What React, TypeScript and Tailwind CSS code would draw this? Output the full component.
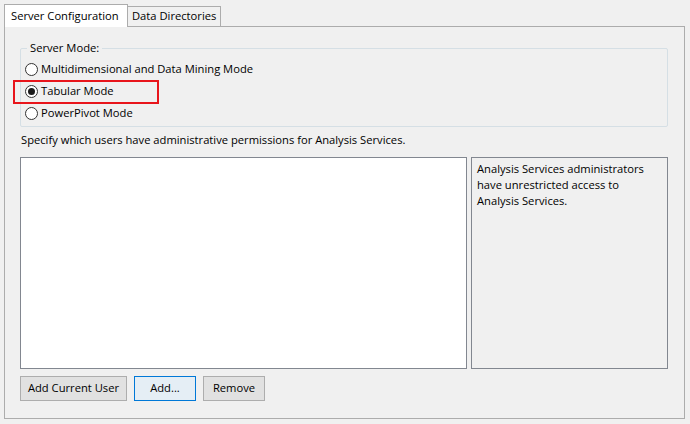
import React from "react";

function Radio({ checked }: { checked?: boolean }) {
  return (
    <span className="w-[13px] h-[13px] rounded-full border border-[#333] bg-white flex items-center justify-center shrink-0">
      {checked && <span className="w-[7px] h-[7px] rounded-full bg-[#1a1a1a]" />}
    </span>
  );
}

export default function App() {
  return (
    <div
      className="w-[690px] h-[424px] bg-[#f0f0f0] text-[11.2px] text-black overflow-hidden relative whitespace-nowrap"
      style={{ fontFamily: '"Open Sans", "Noto Sans", sans-serif' }}
    >
      <div className="pl-[4px] pt-[3px] flex items-end h-[26px]">
        <div className="h-[23px] w-[124px] bg-white border border-b-0 border-[#acacac] flex items-center pl-[6px] relative z-10 -mb-px">
          Server Configuration
        </div>
        <div className="h-[20px] w-[93px] bg-[#f0f0f0] border border-l-0 border-b-0 border-[#acacac] flex items-center pl-[4px]">
          Data Directories
        </div>
      </div>
      <div className="ml-[4px] w-[681px] h-[393px] border border-[#acacac] px-[15px] pt-[21px]">
        <div className="relative h-[79px] border border-[#d5dfe5] rounded-[2px] w-[648px]">
          <span className="absolute -top-[10px] left-[6px] px-[3px] bg-[#f0f0f0] leading-[18px]">Server Mode:</span>
          <div className="flex flex-col pt-[12px] pl-[4px] gap-[5px]">
            <div className="flex items-center gap-[3px] h-[17px]">
              <Radio />
              <span>Multidimensional and Data Mining Mode</span>
            </div>
            <div className="flex items-center gap-[3px] h-[17px]">
              <Radio checked />
              <span>Tabular Mode</span>
            </div>
            <div className="flex items-center gap-[3px] h-[17px]">
              <Radio />
              <span>PowerPivot Mode</span>
            </div>
          </div>
        </div>
        <div className="pl-[1px] pb-[4px] h-[30px] flex items-center">
          Specify which users have administrative permissions for Analysis Services.
        </div>
        <div className="flex gap-[4px] h-[212px]">
          <div className="w-[447px] bg-white border border-[#828790]" />
          <div className="w-[197px] border border-[#828790] px-[5px] pt-[3px] leading-[16px]">
            Analysis Services administrators
            <br />
            have unrestricted access to
            <br />
            Analysis Services.
          </div>
        </div>
        <div className="flex gap-[7px] mt-[7px]">
          <button className="h-[25px] w-[107px] bg-[#e1e1e1] border border-[#adadad]">Add Current User</button>
          <button className="h-[25px] w-[62px] bg-[#e5eef5] border border-[#0078d7]">Add...</button>
          <button className="h-[25px] w-[62px] bg-[#e1e1e1] border border-[#adadad]">Remove</button>
        </div>
      </div>
      <div className="absolute left-[13px] top-[80px] w-[146px] h-[24px] border-2 border-[#e8151b]" />
    </div>
  );
}
